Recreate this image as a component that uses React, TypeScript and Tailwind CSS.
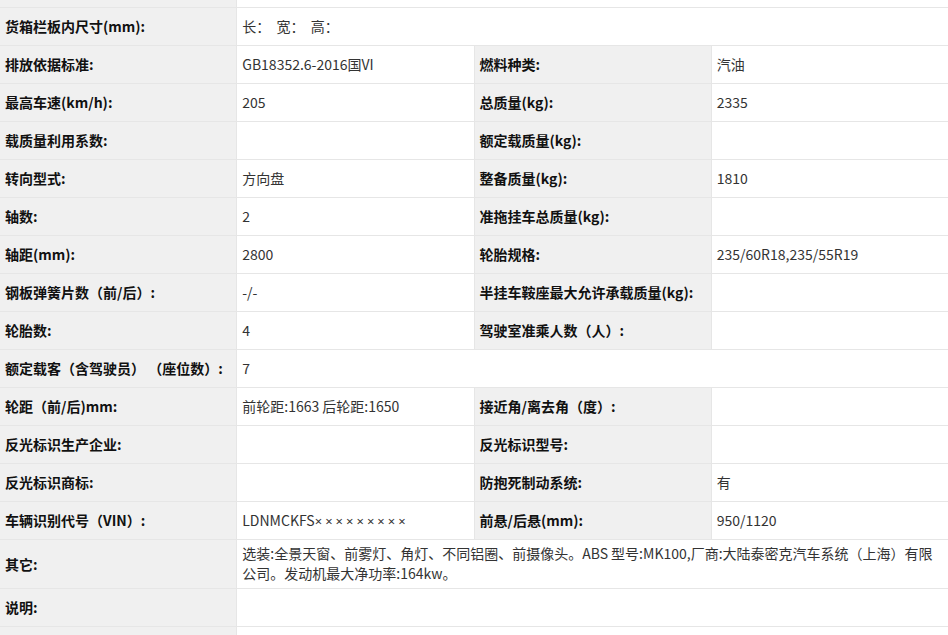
import React from 'react';

type Cell = { text: React.ReactNode; label?: boolean; span?: boolean };

const vin = (
  <span>
    LDNMCKFS
    <span className="tracking-[3px] text-[13px]" style={{ fontFamily: '"Noto Sans", sans-serif' }}>
      ×××××××××
    </span>
  </span>
);

const rows: { cells: Cell[]; tall?: boolean; partial?: boolean }[] = [
  { partial: true, cells: [{ text: '', label: true }, { text: '', span: true }] },
  { cells: [{ text: '货箱栏板内尺寸(mm):', label: true }, { text: '长：  宽：  高：', span: true }] },
  {
    cells: [
      { text: '排放依据标准:', label: true },
      { text: 'GB18352.6-2016国VI' },
      { text: '燃料种类:', label: true },
      { text: '汽油' },
    ],
  },
  {
    cells: [
      { text: '最高车速(km/h):', label: true },
      { text: '205' },
      { text: '总质量(kg):', label: true },
      { text: '2335' },
    ],
  },
  {
    cells: [
      { text: '载质量利用系数:', label: true },
      { text: '' },
      { text: '额定载质量(kg):', label: true },
      { text: '' },
    ],
  },
  {
    cells: [
      { text: '转向型式:', label: true },
      { text: '方向盘' },
      { text: '整备质量(kg):', label: true },
      { text: '1810' },
    ],
  },
  {
    cells: [
      { text: '轴数:', label: true },
      { text: '2' },
      { text: '准拖挂车总质量(kg):', label: true },
      { text: '' },
    ],
  },
  {
    cells: [
      { text: '轴距(mm):', label: true },
      { text: '2800' },
      { text: '轮胎规格:', label: true },
      { text: '235/60R18,235/55R19' },
    ],
  },
  {
    cells: [
      { text: '钢板弹簧片数（前/后）:', label: true },
      { text: '-/-' },
      { text: '半挂车鞍座最大允许承载质量(kg):', label: true },
      { text: '' },
    ],
  },
  {
    cells: [
      { text: '轮胎数:', label: true },
      { text: '4' },
      { text: '驾驶室准乘人数（人）:', label: true },
      { text: '' },
    ],
  },
  { cells: [{ text: '额定载客（含驾驶员） （座位数）:', label: true }, { text: '7', span: true }] },
  {
    cells: [
      { text: '轮距（前/后)mm:', label: true },
      { text: '前轮距:1663 后轮距:1650' },
      { text: '接近角/离去角（度）:', label: true },
      { text: '' },
    ],
  },
  {
    cells: [
      { text: '反光标识生产企业:', label: true },
      { text: '' },
      { text: '反光标识型号:', label: true },
      { text: '' },
    ],
  },
  {
    cells: [
      { text: '反光标识商标:', label: true },
      { text: '' },
      { text: '防抱死制动系统:', label: true },
      { text: '有' },
    ],
  },
  {
    cells: [
      { text: '车辆识别代号（VIN）:', label: true },
      { text: vin },
      { text: '前悬/后悬(mm):', label: true },
      { text: '950/1120' },
    ],
  },
  {
    tall: true,
    cells: [
      { text: '其它:', label: true },
      {
        text: '选装:全景天窗、前雾灯、角灯、不同铝圈、前摄像头。ABS 型号:MK100,厂商:大陆泰密克汽车系统（上海）有限公司。发动机最大净功率:164kw。',
        span: true,
      },
    ],
  },
  { cells: [{ text: '说明:', label: true }, { text: '', span: true }] },
  { cells: [{ text: '', label: true }, { text: '', span: true }] },
];

export default function App() {
  return (
    <div
      className="w-[948px] h-[635px] overflow-hidden bg-white text-[14px]"
      style={{ fontFamily: '"Noto Sans CJK SC", "Noto Sans", sans-serif' }}
    >
      <div className="grid grid-cols-4 gap-px bg-[#e6e6e6] pb-px">
        {rows.map((row, i) =>
          row.cells.map((c, j) => (
            <div
              key={`${i}-${j}`}
              className={[
                'flex px-[5px] whitespace-pre-wrap',
                row.partial ? 'h-[7px]' : row.tall ? 'h-[48px]' : 'h-[37px]',
                row.tall && !c.label ? 'items-start pt-[3px] leading-[20px]' : 'items-center',
                c.span ? 'col-span-3' : '',
                c.label ? 'bg-[#f0f0f0] font-bold text-[#111]' : 'bg-white text-[#333]',
              ].join(' ')}
            >
              {c.text}
            </div>
          ))
        )}
      </div>
    </div>
  );
}
